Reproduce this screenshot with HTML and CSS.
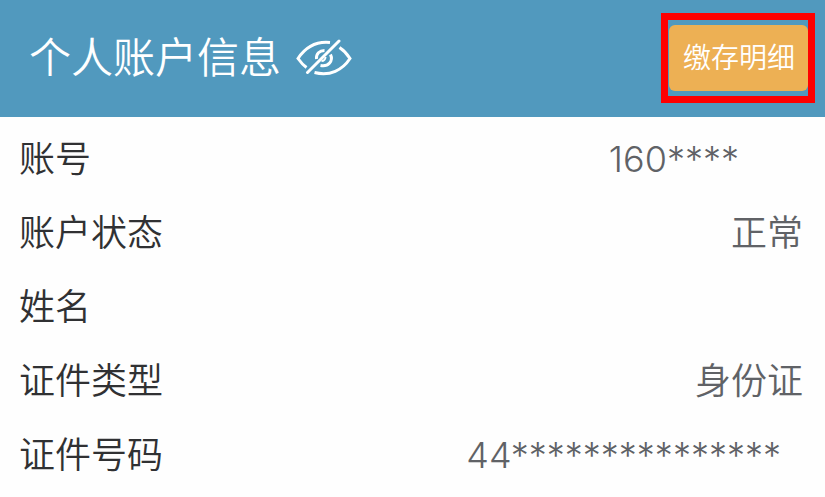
FILE: index.html
```
<!DOCTYPE html>
<html lang="zh-CN">
<head>
    <meta charset="UTF-8">
    <meta name="viewport" content="width=device-width, initial-scale=1.0">
    <title>个人账户信息</title>
    <link rel="stylesheet" href="styles.css">
</head>
<body>
    <header class="header">
        <h1 class="title">个人账户信息</h1>
        <button type="button" class="toggle-btn" aria-label="显示或隐藏账户信息">
            <svg class="eye-icon" viewBox="0 0 56 38" fill="none" stroke="#fff" stroke-width="3">
                <path d="M34 3.500C19 2 9 9 2 19.500C4.500 23 7 26 10.500 28.500"/>
                <path d="M43.500 8.500C48 11.500 51.500 15.500 54 19.500C46.500 31 34 37.500 18.500 33.500"/>
                <path d="M20.500 20C20 14.500 23.500 11.500 28.500 11.500"/>
                <path d="M34.500 15.500C37.500 22 32.500 28 24.500 26.500"/>
                <path d="M29.500 18C29.500 20 28 22 25.500 22" stroke-width="2"/>
                <path d="M43 2L11.500 33.500" stroke-linecap="round"/>
            </svg>
        </button>
        <div class="highlight">
            <button type="button" class="detail-btn">缴存明细</button>
        </div>
    </header>

    <dl class="info-list">
        <div class="info-row">
            <dt>账号</dt>
            <dd class="masked-account">160****</dd>
        </div>
        <div class="info-row">
            <dt>账户状态</dt>
            <dd>正常</dd>
        </div>
        <div class="info-row">
            <dt>姓名</dt>
            <dd></dd>
        </div>
        <div class="info-row">
            <dt>证件类型</dt>
            <dd>身份证</dd>
        </div>
        <div class="info-row">
            <dt>证件号码</dt>
            <dd class="masked-id">44***************</dd>
        </div>
    </dl>
</body>
</html>
```
FILE: styles.css
```
body {
    margin: 0;
    background-color: #fefefe;
    color: #303133;
    font-family: Inter, "Noto Sans CJK SC", sans-serif;
    font-weight: 350;
}

.header {
    display: flex;
    align-items: center;
    box-sizing: border-box;
    min-height: 117px;
    padding: 0 10px 2px 29px;
    background-color: #5199be;
    color: #fff;
}

.title {
    margin: 0;
    font-size: 42px;
    font-weight: 350;
    line-height: 60px;
}

.toggle-btn {
    display: flex;
    margin: 0 0 0 15px;
    padding: 0;
    border: none;
    background: none;
    cursor: pointer;
}

.eye-icon {
    width: 56px;
    height: 38px;
}

.highlight {
    margin-left: auto;
    padding: 5px 0 5px 1px;
    border: 7px solid #f00;
}

.detail-btn {
    display: block;
    height: 66px;
    padding: 0 13px 4px 14px;
    border: none;
    border-radius: 6px;
    background-color: #edb054;
    color: #fff;
    font-family: inherit;
    font-size: 28px;
    font-weight: 350;
    cursor: pointer;
}

.info-list {
    margin: 0;
    padding: 5px 22px 0 19px;
    font-size: 36px;
    line-height: 74px;
}

.info-row {
    display: flex;
    justify-content: space-between;
}

.info-row dd {
    margin: 0;
    color: #606266;
}

.info-row .masked-account {
    padding-right: 64px;
}

.info-row .masked-id {
    padding-right: 22px;
}
```
